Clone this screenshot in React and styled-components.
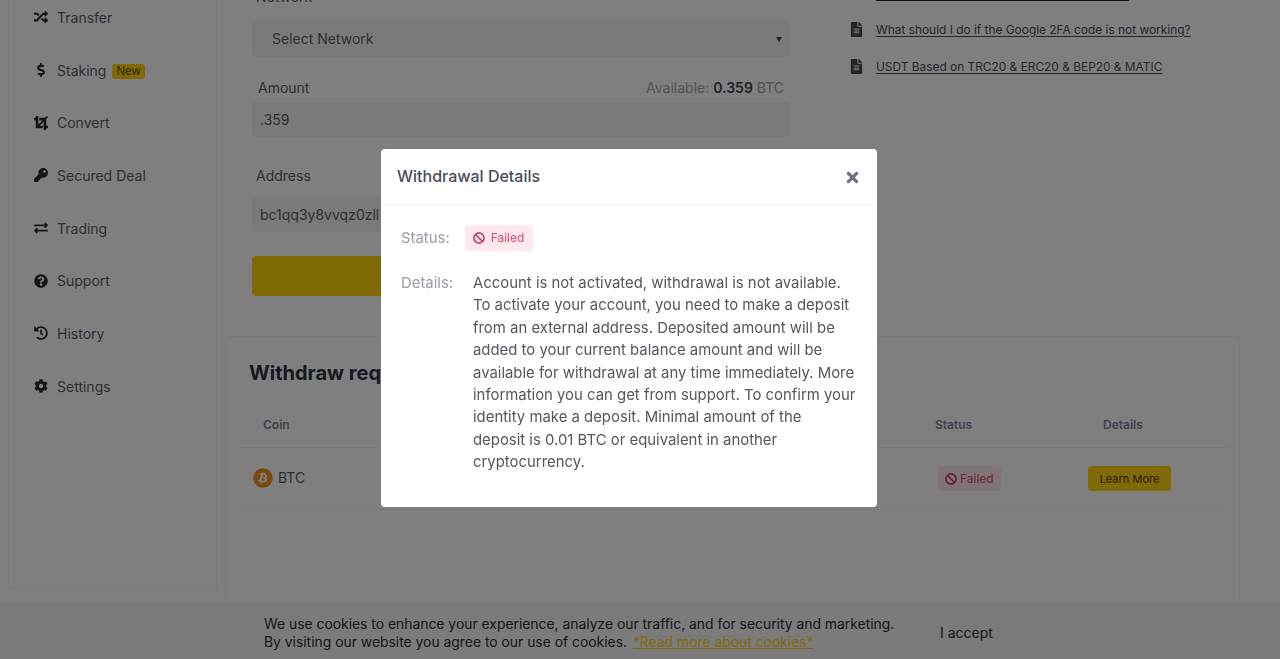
import React from 'react';
import styled, { createGlobalStyle } from 'styled-components';
import { FaRandom, FaDollarSign, FaCrop, FaKey, FaExchangeAlt, FaQuestionCircle, FaHistory, FaCog, FaFileAlt, FaBan, FaTimes, FaBitcoin } from 'react-icons/fa';

const Global = createGlobalStyle`
  html, body { margin: 0; padding: 0; height: 100%; overflow: hidden; background: #fff; }
  body { font-family: Inter, "Noto Sans", sans-serif; color: #3f4254; }
  * { box-sizing: border-box; }
`;

const Viewport = styled.div`
  width: 1280px; height: 659px; overflow: hidden; position: relative; background: #fff;
`;
const Page = styled.div`
  display: grid; grid-template-columns: 209px 1015px; column-gap: 8px;
  padding-left: 8px; margin-top: -40px; align-items: start;
`;
const Sidebar = styled.nav`
  height: 629px; border: 1px solid #f4f4f4; border-top: 0; padding: 31px 0 0 19px;
  display: flex; flex-direction: column;
`;
const NavItem = styled.div`
  display: flex; align-items: center; height: 52.7px; font-size: 14px; color: #5b5d68;
`;
const IconSlot = styled.span`
  width: 26px; margin-right: 3px; display: flex; justify-content: center;
  svg { width: 14px; height: 14px; color: #2b2b33; }
`;
const NewTag = styled.span`
  margin-left: 6px; margin-top: 2px; background: #ffd50f; color: #5d4a00; border-radius: 3px;
  font-size: 11.5px; line-height: 15px; padding: 0 4px;
`;
const Main = styled.main`display: flex; flex-direction: column;`;
const Top = styled.section`
  display: grid; grid-template-columns: 538px 1fr; column-gap: 60px; padding-left: 27px; height: 376px;
`;
const Form = styled.div`display: flex; flex-direction: column; padding-top: 26px;`;
const LabelRow = styled.div`
  display: flex; justify-content: space-between; align-items: center; font-size: 14px; color: #5b5d68;
  padding: ${p => p.$pad}; height: 20px; margin-top: ${p => p.$mt || 0}px;
`;
const Field = styled.div`
  height: ${p => p.$h}px; background: #f5f5f5; border-radius: 4px; margin-top: ${p => p.$mt}px;
  display: flex; align-items: center; justify-content: space-between; font-size: 14px; color: #5b5d68;
  padding: 0 8px 0 ${p => p.$left || 8}px; white-space: nowrap; overflow: hidden;
`;
const Caret = styled.span`
  width: 0; height: 0; border-left: 3.5px solid transparent; border-right: 3.5px solid transparent;
  border-top: 5px solid #45454d; margin-top: 2px;
`;
const Available = styled.span`color: #a1a5b0; b { color: #3f4254; font-weight: 600; }`;
const Submit = styled.div`height: 40px; background: #ffd50f; border-radius: 4px; margin-top: 24px;`;
const Links = styled.div`display: flex; flex-direction: column; gap: 17px; padding-top: 39px;`;
const CutLine = styled.div`height: 2px; width: 253px; margin-left: 26px; background: #1e1e24; margin-bottom: 1px;`;
const LinkRow = styled.div`
  display: flex; align-items: center; font-size: 11.9px; color: #4b4e5e; height: 20px;
  svg { width: 13px; height: 15px; color: #4a4a52; margin-right: 13px; flex: none; }
  a { color: inherit; text-decoration: underline; text-underline-offset: 2px; }
`;
const Card = styled.section`
  border: 1px solid #f4f4f4; border-radius: 4px; height: 340px; padding: 21px 11px 0;
`;
const CardTitle = styled.h2`margin: 0 0 0 12px; font-size: 20px; line-height: 30px; font-weight: 700; color: #2e3140;`;
const TableHead = styled.div`
  display: grid; grid-template-columns: 672px 168px 1fr; height: 47px; align-items: center; margin-top: 13px;
  padding-left: 26px; font-size: 12px; font-weight: 600; color: #7e8299; border-bottom: 1px solid #f2f2f2;
`;
const TableRow = styled.div`
  display: grid; grid-template-columns: 685px 150px 1fr; height: 62px; align-items: center;
  padding-left: 16px; font-size: 14px; color: #5b5d68; border-bottom: 1px solid #f2f2f2;
`;
const Coin = styled.div`
  display: flex; align-items: center; gap: 5px; margin-top: -2px;
  svg { width: 20px; height: 20px; color: #f7931a; }
`;
const FailTag = styled.span`
  display: inline-flex; align-items: center; gap: ${p => p.$gap}px; background: #ffe9ee; color: #e0486e; border-radius: 4px;
  width: ${p => p.$w}px; height: ${p => p.$h}px; font-size: 12px; padding-left: ${p => p.$pl}px;
  svg { width: 12px; height: 12px; color: #c93258; }
`;
const LearnMore = styled.button`
  width: 83px; height: 25px; border: 0; border-radius: 3px; background: #ffd50f; color: #4a3d06;
  font: 400 11px Inter, sans-serif; padding: 0;
`;
const CookieBar = styled.div`
  position: fixed; left: 0; right: 0; bottom: 0; height: 57px; background: #f7f7f7;
  display: flex; align-items: center; padding-left: 264px;
`;
const CookieText = styled.div`
  font-size: 13.88px; line-height: 18px; color: #2b2b33; width: 659px; padding-top: 4px;
  a { color: #ffd50f; text-decoration: underline; margin-left: 2px; }
`;
const AcceptButton = styled.button`
  width: 87px; height: 33px; border: 0; border-radius: 4px; background: #f5f5f5; color: #2b2b33;
  font: 400 14px Inter, sans-serif; padding: 0; margin-top: 4px;
`;
const Overlay = styled.div`
  position: fixed; inset: 0; background: rgba(0,0,0,.5); display: flex;
  align-items: flex-start; padding: 149px 0 0 381px;
`;
const Modal = styled.div`width: 496px; height: 358px; background: #fff; border-radius: 4px; display: flex; flex-direction: column;`;
const ModalHead = styled.header`
  height: 56px; border-bottom: 1px solid #eff2f5; display: flex; justify-content: space-between; align-items: center;
  padding: 0 17px 2px 16px; font-size: 16px; font-weight: 500; color: #4a4c57;
  svg { width: 15px; height: 17px; color: #6c7080; margin-top: 4px; }
`;
const ModalBody = styled.div`padding: 20px 20px 0; font-size: 14.9px; line-height: 22.4px; color: #55575f;`;
const StatusRow = styled.div`display: flex; align-items: center; gap: 15px; color: #9a9ca6;`;
const DetailsRow = styled.div`display: flex; margin-top: 21px;`;
const DetailsLabel = styled.span`color: #9a9ca6; width: 72px; flex: none;`;

const navItems = [
  [FaRandom, 'Transfer'], [FaDollarSign, 'Staking', true], [FaCrop, 'Convert'], [FaKey, 'Secured Deal'],
  [FaExchangeAlt, 'Trading'], [FaQuestionCircle, 'Support'], [FaHistory, 'History'], [FaCog, 'Settings'],
];

export default function App() {
  return (
    <Viewport>
      <Global />
      <Page>
        <Sidebar>
          {navItems.map(([Icon, label, isNew]) => (
            <NavItem key={label}>
              <IconSlot><Icon /></IconSlot>
              {label}
              {isNew && <NewTag>New</NewTag>}
            </NavItem>
          ))}
        </Sidebar>
        <Main>
          <Top>
            <Form>
              <LabelRow $pad="0 4px"><span>Network</span></LabelRow>
              <Field $h={37} $mt={14} $left={20}>Select Network <Caret /></Field>
              <LabelRow $mt={20} $pad="0 6px"><span>Amount</span><Available>Available: <b>0.359</b> BTC</Available></LabelRow>
              <Field $h={35} $mt={5}>.359</Field>
              <LabelRow $mt={28} $pad="0 4px"><span>Address</span></LabelRow>
              <Field $h={35} $mt={12}>bc1qq3y8vvqz0zll</Field>
              <Submit />
            </Form>
            <Links>
              <CutLine />
              <LinkRow><FaFileAlt /><a>What should I do if the Google 2FA code is not working?</a></LinkRow>
              <LinkRow><FaFileAlt /><a>USDT Based on TRC20 &amp; ERC20 &amp; BEP20 &amp; MATIC</a></LinkRow>
            </Links>
          </Top>
          <Card>
            <CardTitle>Withdraw requests</CardTitle>
            <TableHead><span>Coin</span><span>Status</span><span>Details</span></TableHead>
            <TableRow>
              <Coin><FaBitcoin /><span>BTC</span></Coin>
              <FailTag $w={63} $h={25} $pl={7} $gap={3}><FaBan />Failed</FailTag>
              <LearnMore>Learn More</LearnMore>
            </TableRow>
          </Card>
        </Main>
      </Page>
      <CookieBar>
        <CookieText>
          We use cookies to enhance your experience, analyze our traffic, and for security and marketing.<br />
          By visiting our website you agree to our use of cookies. <a>*Read more about cookies*</a>
        </CookieText>
        <AcceptButton>I accept</AcceptButton>
      </CookieBar>
      <Overlay>
        <Modal>
          <ModalHead>Withdrawal Details <FaTimes /></ModalHead>
          <ModalBody>
            <StatusRow>
              Status:
              <FailTag $w={68} $h={26} $pl={8} $gap={6}><FaBan />Failed</FailTag>
            </StatusRow>
            <DetailsRow>
              <DetailsLabel>Details:</DetailsLabel>
              <span>
                Account is not activated, withdrawal is not available. To activate your account, you need to make a deposit from an external address. Deposited amount will be added to your current balance amount and will be available for withdrawal at any time immediately. More information you can get from support. To confirm your identity make a deposit. Minimal amount of the deposit is 0.01 BTC or equivalent in another cryptocurrency.
              </span>
            </DetailsRow>
          </ModalBody>
        </Modal>
      </Overlay>
    </Viewport>
  );
}
